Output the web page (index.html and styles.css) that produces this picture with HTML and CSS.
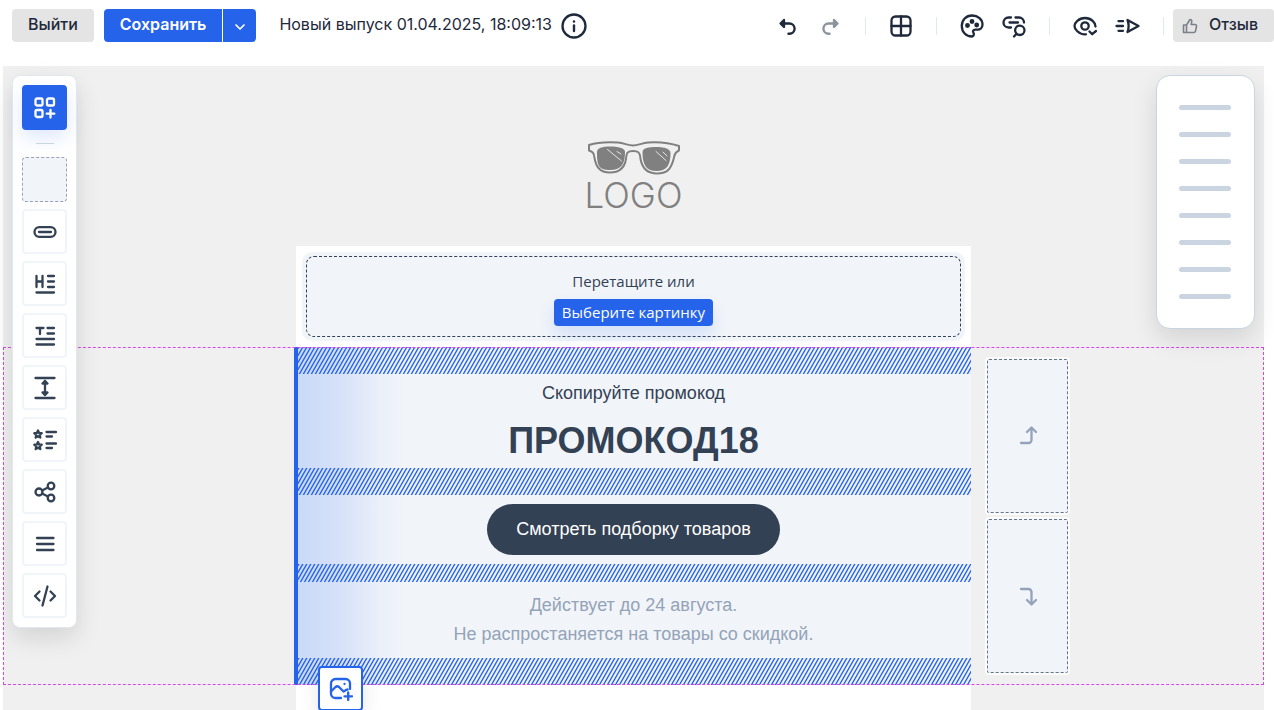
FILE: index.html
```html
<!DOCTYPE html>
<html lang="ru">
<head>
    <meta charset="UTF-8">
    <meta name="viewport" content="width=device-width, initial-scale=1.0">
    <title>Редактор выпуска</title>
    <link rel="stylesheet" href="styles.css">
</head>
<body>
    <header class="topbar">
        <button type="button" class="btn btn-gray">Выйти</button>
        <div class="save-group">
            <button type="button" class="btn btn-save">Сохранить</button>
            <button type="button" class="btn btn-more" aria-label="Ещё">
                <svg width="12" height="12" viewBox="0 0 12 12"><path d="M2 4l4 4 4-4" stroke-width="1.7"/></svg>
            </button>
        </div>
        <span class="issue-name">Новый выпуск 01.04.2025, 18:09:13</span>
        <button type="button" class="icon-btn" aria-label="Информация">
            <svg width="26" height="26" viewBox="0 0 26 26"><circle cx="13" cy="13" r="11.5"/><path d="M13 12.5v5.5" stroke-width="2.4"/><path d="M13 8.4v.1" stroke-width="2.4"/></svg>
        </button>

        <div class="tools">
            <div class="tools-group">
                <button type="button" class="icon-btn" aria-label="Отменить">
                    <svg width="24" height="24" viewBox="0 0 24 24"><path d="M7 9.5h6.5a5 5 0 0 1 0 10.2h-1" stroke-width="2.4"/><path d="M8 6L4.5 9.5 8 13z" fill="currentColor"/></svg>
                </button>
                <button type="button" class="icon-btn" aria-label="Повторить" disabled>
                    <svg width="24" height="24" viewBox="0 0 24 24"><path d="M17 9.5h-6.5a5 5 0 0 0 0 10.2h1" stroke-width="2.4"/><path d="M16 6l3.5 3.5L16 13z" fill="currentColor"/></svg>
                </button>
            </div>
            <span class="divider"></span>
            <button type="button" class="icon-btn" aria-label="Сетка">
                <svg width="24" height="24" viewBox="0 0 24 24"><rect x="2.5" y="2.5" width="19" height="19" rx="4"/><path d="M12 2.5v19M2.5 12h19"/></svg>
            </button>
            <span class="divider"></span>
            <div class="tools-group">
                <button type="button" class="icon-btn" aria-label="Стили">
                    <svg width="24" height="24" viewBox="0 0 24 24"><path d="M12 22.5C6 22.5 1.8 18 1.8 12S6 1.5 12 1.5c6 0 10.5 4 10.5 9 0 3.5-2.5 5.2-5 5.2h-2.3c-2 0-2.7 1.5-1.8 3 1 1.7.3 3.8-1.4 3.8z"/><circle cx="7.5" cy="11.5" r="1.3" fill="currentColor"/><circle cx="12" cy="7.5" r="1.3" fill="currentColor"/><circle cx="16.7" cy="11" r="1.3" fill="currentColor"/></svg>
                </button>
                <button type="button" class="icon-btn" aria-label="Проверить ссылки">
                    <svg width="24" height="24" viewBox="0 0 24 24"><path d="M9 3.5H6.5a5 5 0 0 0 0 10H9M13.5 3.5H17a5 5 0 0 1 5 5M7.5 8.5h8.5"/><circle cx="17.8" cy="16.3" r="4.7"/><path d="M14.5 19.7L12 22.5"/></svg>
                </button>
            </div>
            <span class="divider"></span>
            <div class="tools-group">
                <button type="button" class="icon-btn" aria-label="Просмотр">
                    <svg width="24" height="24" viewBox="0 0 24 24"><path d="M13 20.3h-1C5.5 20.3 1.5 15 1.5 12S5.5 4 12 4s10.5 5 10.5 8.5"/><circle cx="12" cy="12" r="3.7"/><path d="M16.5 17.5l2.7 2.7 3.8-3.2"/></svg>
                </button>
                <button type="button" class="icon-btn" aria-label="Отправить">
                    <svg width="25" height="24" viewBox="0 0 25 24"><path d="M12.5 6l11 6-11 6c1.5-4 1.5-8 0-12z"/><path d="M3.5 7.2h4.5M1.5 12h6.5M3.5 16.8h4.5"/></svg>
                </button>
            </div>
            <span class="divider"></span>
        </div>
        <button type="button" class="btn btn-gray btn-feedback">
            <svg width="16" height="16" viewBox="0 0 16 16"><path d="M4.5 7v7.5M1.5 7h3L8 1.5c1.5 0 2 1 1.7 2.3L9.2 6.5H13c1 0 1.7.8 1.5 1.8l-1 4.8c-.2.9-.8 1.4-1.6 1.4H1.5z" stroke-width="1.6"/></svg>
            Отзыв
        </button>
    </header>

    <main class="canvas">
        <div class="mail-logo">
            <svg width="92" height="36" viewBox="0 0 92 36">
                <path class="frame" d="M1 4C10 1 22 1 30 1.5 36 2 40 4.5 45 4.5S54 2 60 1.5C70 .8 82 2 91 5v4.5c-4 1.5-4.5 4-5 7C83.5 27 80 32.5 69 32.5 58 32.5 54 26 52.5 18 52 11 50 10 45 10s-6.5 1-7 8C36.5 27 32 31.5 22 31.5 11 31.5 8 25 6.5 17 6 12 5 11 1 9.5z"/>
                <path class="lens" d="M9 11C9 7 14 5.5 22 5.5S37 7 37 11C37 22 34 29 22 29S9 24 9 11z"/>
                <path class="lens" d="M54.5 11c0-4 6-5 14-5s14 2 14 6c0 11-3 18-14 18s-14-7-14-19z"/>
                <path class="glare" d="M19.5 8.5l14 11.5M29 10.5l4 2.5M68 10.5l10 9M75 11l4 4"/>
            </svg>
            <span class="logo-text">LOGO</span>
        </div>

        <div class="mail-body">
            <div class="dropzone">
                <div class="dropzone-inner">
                    <span>Перетащите или</span>
                    <button type="button" class="pick-btn">Выберите картинку</button>
                </div>
            </div>
        </div>

        <section class="selected-row">
            <div class="mail-section">
                <div class="hatch"></div>
                <div class="promo">
                    <p class="promo-hint">Скопируйте промокод</p>
                    <h1 class="promo-code">ПРОМОКОД18</h1>
                </div>
                <div class="hatch"></div>
                <div class="cta-wrap">
                    <a href="#" class="cta">Смотреть подборку товаров</a>
                </div>
                <div class="hatch hatch-small"></div>
                <p class="terms">Действует до 24 августа.<br>Не распростаняется на товары со скидкой.</p>
                <div class="hatch"></div>
                <button type="button" class="add-image" aria-label="Добавить картинку">
                    <svg width="24" height="24" viewBox="0 0 24 24"><path d="M12 21H6.5A4.5 4.5 0 0 1 2 16.5v-10A4.5 4.5 0 0 1 6.5 2h10A4.5 4.5 0 0 1 21 6.5V12"/><path d="M2 14.5L6.5 10c1.2-1 2.3-1 3.5 0l4.5 4.5c1.3-.2 2-1.8 4-2"/><path d="M15.5 7v.1M19.2 15.5v7.5M15.5 19.3h7.5"/></svg>
                </button>
            </div>
            <div class="slots">
                <button type="button" class="slot" aria-label="Добавить выше">
                    <svg width="24" height="24" viewBox="0 0 24 24"><path d="M5 19h7.5a3 3 0 0 0 3-3V4M11 8L15.5 3.5 20 8"/></svg>
                </button>
                <button type="button" class="slot" aria-label="Добавить ниже">
                    <svg width="24" height="24" viewBox="0 0 24 24"><path d="M5 5h7.5a3 3 0 0 1 3 3v12M11 16l4.5 4.5 4.5-4.5"/></svg>
                </button>
            </div>
        </section>

        <div class="mail-body mail-rest"></div>

        <nav class="blocks">
            <button type="button" class="block block-active" aria-label="Блоки">
                <svg width="24" height="24" viewBox="0 0 24 24"><rect x="2.5" y="2.5" width="7" height="7" rx="1.5"/><rect x="14" y="2.5" width="7" height="7" rx="1.5"/><rect x="2.5" y="14" width="7" height="7" rx="1.5"/><path d="M17.5 14v7.5M13.7 17.7h7.6"/></svg>
            </button>
            <span class="blocks-line"></span>
            <button type="button" class="block block-empty" aria-label="Пустой блок"></button>
            <button type="button" class="block" aria-label="Кнопка">
                <svg width="24" height="24" viewBox="0 0 24 24"><rect x="1.5" y="7.2" width="21" height="9.6" rx="4.8"/><path d="M6 12h12"/></svg>
            </button>
            <button type="button" class="block" aria-label="Заголовок">
                <svg width="24" height="24" viewBox="0 0 24 24"><path d="M3.5 4v11M9.5 4v11M3.5 9.5h6M15 4h6M15 9.5h6M15 15h6M3.5 20.5H21"/></svg>
            </button>
            <button type="button" class="block" aria-label="Текст">
                <svg width="24" height="24" viewBox="0 0 24 24"><path d="M3.5 4h7M7 4v6M14.5 4H21M14.5 9.5H21M3.5 15H21M3.5 20.5H21"/></svg>
            </button>
            <button type="button" class="block" aria-label="Отступ">
                <svg width="24" height="24" viewBox="0 0 24 24"><path d="M2.5 2h19M2.5 22h19M12 5v14"/><path d="M9.5 7.5L12 5l2.5 2.5zM9.5 16.5L12 19l2.5-2.5z" fill="currentColor"/></svg>
            </button>
            <button type="button" class="block" aria-label="Список">
                <svg width="24" height="24" viewBox="0 0 24 24"><path d="M5 2.5l1.1 2.4 2.6.3-1.9 1.8.5 2.6L5 8.3 2.7 9.6l.5-2.6-1.9-1.8 2.6-.3zM5 14l1.1 2.4 2.6.3-1.9 1.8.5 2.6L5 19.800l-2.300 1.300.5-2.600-1.900-1.800 2.600-.3z"/><path d="M13.500 4h9.500M13.500 8.500h5.500M13.500 15.500h9.500M13.500 20h5.500"/></svg>
            </button>
            <button type="button" class="block" aria-label="Соцсети">
                <svg width="24" height="24" viewBox="0 0 24 24"><circle cx="6" cy="12" r="3.500"/><circle cx="18" cy="6" r="3.300"/><circle cx="18" cy="18" r="3.300"/><path d="M9 10.500l6-3M9 13.500l6 3"/></svg>
            </button>
            <button type="button" class="block" aria-label="Меню">
                <svg width="24" height="24" viewBox="0 0 24 24"><path d="M4 6h16.500M4 12h16.500M4 18h16.500"/></svg>
            </button>
            <button type="button" class="block" aria-label="HTML-код">
                <svg width="24" height="24" viewBox="0 0 24 24"><path d="M6.500 7.500L2 12l4.500 4.500M17.500 7.500L22 12l-4.500 4.500M14.500 2.500l-5 19"/></svg>
            </button>
        </nav>

        <aside class="settings">
            <span class="bar"></span>
            <span class="bar"></span>
            <span class="bar"></span>
            <span class="bar"></span>
            <span class="bar"></span>
            <span class="bar"></span>
            <span class="bar"></span>
            <span class="bar"></span>
        </aside>
    </main>
</body>
</html>
```
FILE: styles.css
```css
* {
    box-sizing: border-box;
}

body {
    margin: 0;
    height: 100vh;
    display: flex;
    flex-direction: column;
    overflow: hidden;
    background: #fff;
    color: #1e293b;
    font-family: Inter, "Liberation Sans", sans-serif;
    font-size: 16px;
}

button {
    margin: 0;
    padding: 0;
    border: none;
    font: inherit;
    color: inherit;
    cursor: pointer;
}

svg {
    display: block;
    fill: none;
    stroke: currentColor;
    stroke-width: 2.3;
    stroke-linecap: round;
    stroke-linejoin: round;
}

/* top bar */
.topbar {
    display: flex;
    align-items: center;
    flex: none;
    height: 66px;
    padding: 0 0 15px 12px;
}

.btn {
    height: 33px;
    padding: 0 16px 3px;
    border-radius: 4px;
    white-space: nowrap;
}

.btn-gray {
    background: #e4e4e4;
    font-weight: 500;
}

.save-group {
    display: flex;
    gap: 1px;
    margin: 0 23px 0 10px;
}

.btn-save {
    background: #2563eb;
    color: #fff;
    font-weight: 600;
    border-radius: 4px 0 0 4px;
}

.btn-more {
    display: flex;
    align-items: center;
    justify-content: center;
    width: 33px;
    padding: 2px 0 0;
    background: #2563eb;
    color: #fff;
    border-radius: 0 4px 4px 0;
}

.issue-name {
    margin-right: 9px;
    padding-bottom: 3px;
    white-space: nowrap;
}

.icon-btn {
    background: none;
}

.icon-btn:disabled {
    opacity: 0.5;
}

.tools {
    display: flex;
    align-items: center;
    margin-left: auto;
}

.tools-group {
    display: flex;
    gap: 18px;
}

.divider {
    width: 1px;
    height: 18px;
    margin: 0 23px;
    background: #e2e8f0;
}

.divider:last-child {
    margin-right: 9px;
}

.btn-feedback {
    display: flex;
    align-items: center;
    gap: 11px;
    padding: 0 16px 3px 9px;
}

.btn-feedback svg {
    color: #7b818b;
    margin-top: 3px;
}

/* canvas */
.canvas {
    position: relative;
    flex: 1;
    display: flex;
    flex-direction: column;
    margin: 0 10px 0 3px;
    background: #f0f0f0;
}

.mail-logo {
    display: flex;
    flex-direction: column;
    align-items: center;
    height: 180px;
    padding-top: 75px;
    color: #808080;
}

.mail-logo .frame {
    stroke-width: 2;
}

.mail-logo .lens {
    fill: #808080;
    stroke: none;
}

.mail-logo .glare {
    stroke: #e4e4e4;
    stroke-width: 1;
}

.logo-text {
    font-family: Inter, sans-serif;
    font-size: 35px;
    font-weight: 300;
    line-height: 36px;
}

.mail-body {
    width: 675px;
    max-width: 100%;
    margin: 0 auto;
    padding: 6px;
    background: #fff;
}

.mail-rest {
    flex: 1;
}

.dropzone {
    padding: 4px;
    border-radius: 10px;
    background: #f1f5f9;
    font-family: "Open Sans", sans-serif;
    font-size: 15px;
    line-height: 20px;
    color: #334155;
}

.dropzone-inner {
    display: flex;
    flex-direction: column;
    align-items: center;
    gap: 8px;
    height: 81px;
    padding-top: 14px;
    border: 1px dashed #334155;
    border-radius: 8px;
}

.pick-btn {
    height: 27px;
    padding: 0 8px 2px;
    border-radius: 4px;
    background: #2563eb;
    color: #fff;
    box-shadow: 0 8px 16px rgba(37, 99, 235, 0.15);
}

/* selected section */
.selected-row {
    position: relative;
    display: grid;
    grid-template-columns: 1fr 675px 1fr;
}

.selected-row::after {
    content: "";
    position: absolute;
    inset: 0;
    border: 1px dashed #d946ef;
    pointer-events: none;
}

.mail-section {
    position: relative;
    grid-column: 2;
    margin-left: -2px;
    border-left: 4px solid #2563eb;
    background: linear-gradient(90deg, #c9d9f7 0, #d5e1f8 40px, #eaeff9 80px, #f1f5f9 106px);
    font-family: "Liberation Sans", Arial, sans-serif;
    font-size: 18px;
    text-align: center;
    color: #334155;
}

/* 4x7 tile with one slanted line */
.hatch {
    height: 27px;
    background: url("data:image/svg+xml,%3Csvg xmlns='http://www.w3.org/2000/svg' width='4' height='7'%3E%3Cpath d='M4 0h1.6l-4 7H0zM0 0h1.6l-4 7H-4z' fill='%232563eb'/%3E%3C/svg%3E");
}

.hatch-small {
    height: 18px;
}

.promo {
    height: 94px;
    padding: 9px 2px 0 0;
}

.promo-hint {
    margin: 0;
    line-height: 20px;
}

.promo-code {
    margin: 9px 0 0;
    font-size: 36px;
    line-height: 58px;
}

.cta-wrap {
    display: flex;
    justify-content: center;
    padding: 9px 2px 9px 0;
}

.cta {
    padding: 0 29px;
    border-radius: 26px;
    background: #334155;
    color: #fff;
    line-height: 51px;
    text-decoration: none;
}

.terms {
    margin: 0;
    padding: 9px 2px 9px 0;
    line-height: 29px;
    color: #94a3b8;
}

/* sits over the bottom edge of the section */
.add-image {
    position: absolute;
    z-index: 1;
    left: 20px;
    bottom: -26px;
    display: flex;
    align-items: center;
    justify-content: center;
    width: 45px;
    height: 45px;
    border: 2px solid #2563eb;
    border-radius: 4px;
    background: #fff;
    color: #2563eb;
    box-shadow: 0 8px 20px rgba(15, 23, 42, 0.1);
}

.slots {
    display: flex;
    flex-direction: column;
    gap: 6px;
    padding: 12px 0 12px 16px;
}

.slot {
    display: flex;
    flex: 1;
    align-items: center;
    justify-content: center;
    width: 81px;
    border: 1px dashed #64748b;
    border-radius: 2px;
    background: #f1f5f9;
    color: #94a3b8;
    box-shadow: 0 0 0 2px #fcfcfc;
}

/* floating panels */
.blocks {
    position: absolute;
    top: 9px;
    left: 9px;
    display: flex;
    flex-direction: column;
    align-items: center;
    gap: 7px;
    padding: 9px;
    border: 1px solid #e2e8f0;
    border-radius: 8px;
    background: #fff;
    box-shadow: 0 10px 24px rgba(0, 0, 0, 0.12);
}

.block {
    display: flex;
    align-items: center;
    justify-content: center;
    width: 45px;
    height: 45px;
    border: 2px solid #f1f5f9;
    border-radius: 4px;
    background: #fff;
    color: #334155;
}

.block-active {
    border-color: #2563eb;
    background: #2563eb;
    color: #fff;
    box-shadow: 0 8px 18px rgba(37, 99, 235, 0.15);
}

.block-empty {
    border: 1px dashed #94a3b8;
    background: #f1f5f9;
}

.blocks-line {
    width: 18px;
    height: 1px;
    margin: 6px 0;
    background: #cbd5e1;
}

.settings {
    position: absolute;
    top: 9px;
    right: 9px;
    display: flex;
    flex-direction: column;
    gap: 22px;
    padding: 29px 23px 29px 22px;
    border: 1px solid #cbd5e1;
    border-radius: 14px;
    background: #fff;
    box-shadow: 0 10px 24px rgba(0, 0, 0, 0.12);
}

.bar {
    width: 52px;
    height: 5px;
    border-radius: 3px;
    background: #cbd5e1;
}
```
